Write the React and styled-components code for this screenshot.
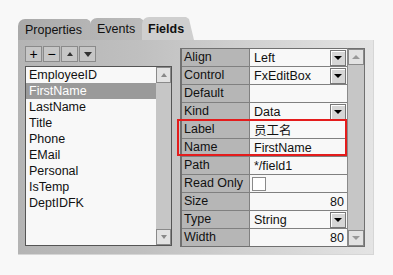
import React from "react";
import styled, { createGlobalStyle, css } from "styled-components";

const Global = createGlobalStyle`
  body {
    margin: 0;
    background: #f8f8f8;
    font-family: "Liberation Sans", Arial, "Noto Sans CJK SC", sans-serif;
    font-size: 12px;
    color: #111;
  }
`;

const Root = styled.div`
  padding: 17px 0 0 18px;
  width: 356px;
`;

const TabBar = styled.div`
  display: flex;
  align-items: flex-end;
  height: 23px;
`;

const Tab = styled.div`
  position: relative;
  box-sizing: border-box;
  height: ${(p) => p.$h}px;
  width: ${(p) => p.$w}px;
  margin-left: ${(p) => p.$ml || 0}px;
  padding-left: ${(p) => p.$pl}px;
  display: flex;
  align-items: center;
  border-top-left-radius: 7px;
  clip-path: polygon(0 0, calc(100% - 8px) 0, calc(100% - 5px) 2px, 100% 100%, 0 100%);
  background: ${(p) => p.$bg};
  z-index: ${(p) => p.$z};
  font-size: 12.5px;
  font-weight: ${(p) => (p.$active ? 700 : 400)};
  color: #111;
`;

const Panel = styled.div`
  display: flex;
  gap: 8px;
  box-sizing: border-box;
  height: 215px;
  padding: 6px 0 0 7px;
  background: linear-gradient(to right, #b4b4b4 0%, #c0c0c0 35%, #cecece 60%, #e4e4e4 100%);
  border-right: 1px solid #d6d6d6;
  border-bottom: 1px solid #d6d6d6;
`;

const LeftCol = styled.div`
  display: flex;
  flex-direction: column;
  gap: 4px;
  width: 147px;
`;

const ToolRow = styled.div`
  display: flex;
  gap: 1px;
  height: 16px;
`;

const ToolButton = styled.div`
  box-sizing: border-box;
  width: 17px;
  height: 16px;
  border: 1px solid #8a8a8a;
  background: #c6c6c6;
  display: flex;
  align-items: center;
  justify-content: center;
  font-size: 14px;
  font-weight: 400;
  color: #000;
  line-height: 1;
`;

const Tri = styled.span`
  width: 0;
  height: 0;
  border-left: ${(p) => p.$s}px solid transparent;
  border-right: ${(p) => p.$s}px solid transparent;
  ${(p) =>
    p.$up
      ? css`border-bottom: ${p.$h}px solid ${p.$c};`
      : css`border-top: ${p.$h}px solid ${p.$c};`}
`;

const ListBox = styled.div`
  box-sizing: border-box;
  height: 180px;
  border: 1px solid #555;
  background: #f8f8f8;
  display: flex;
`;

const Items = styled.div`
  flex: 1;
  display: flex;
  flex-direction: column;
`;

const Item = styled.div`
  height: 16px;
  line-height: 16px;
  padding-left: 3px;
  font-size: 12.5px;
  background: ${(p) => (p.$sel ? "#9a9a9a" : "transparent")};
  color: ${(p) => (p.$sel ? "#fff" : "#111")};
`;

const ScrollBar = styled.div`
  box-sizing: border-box;
  width: ${(p) => p.$w}px;
  display: flex;
  flex-direction: column;
  justify-content: space-between;
  background: #c6c6c6;
  ${(p) => p.$border && css`border: 1px solid #707070; border-left: 0;`}
`;

const ScrollBtn = styled.div`
  box-sizing: border-box;
  height: ${(p) => p.$h}px;
  border: 1px solid #8a8a8a;
  background: #e2e2e2;
  display: flex;
  align-items: center;
  justify-content: center;
`;

const GridWrap = styled.div`
  position: relative;
  margin-top: 2px;
  display: flex;
  height: 199px;
`;

const Grid = styled.div`
  box-sizing: border-box;
  width: 168px;
  border: 1px solid #707070;
  border-left-width: 2px;
  border-right-color: #8a8a8a;
  display: flex;
  flex-direction: column;
`;

const Row = styled.div`
  display: flex;
  height: 18px;
  box-sizing: border-box;
  border-bottom: ${(p) => (p.$last ? 0 : "1px solid #808080")};
`;

const NameCell = styled.div`
  box-sizing: border-box;
  width: 68px;
  padding-left: 2px;
  background: #b6b6b6;
  border-right: 1px solid #808080;
  line-height: 17px;
  font-size: 12.5px;
  color: #111;
`;

const ValueCell = styled.div`
  flex: 1;
  display: flex;
  align-items: center;
  justify-content: ${(p) => (p.$right ? "flex-end" : "space-between")};
  padding: 0 ${(p) => (p.$right ? 3 : 1)}px 0 4px;
  background: #f8f8f8;
  font-size: 12.5px;
`;

const DropBtn = styled.div`
  box-sizing: border-box;
  width: 16px;
  height: 16px;
  border: 1px solid #777;
  box-shadow: inset 1px 1px 0 #fff;
  background: #d6d6d6;
  display: flex;
  align-items: center;
  justify-content: center;
`;

const Check = styled.div`
  box-sizing: border-box;
  width: 14px;
  height: 14px;
  border: 1px solid #8a8a8a;
  background: #fff;
  margin-left: -2px;
`;

const Highlight = styled.div`
  position: absolute;
  left: -3px;
  top: 71px;
  width: 170px;
  height: 37px;
  box-sizing: border-box;
  border: 2px solid #e41c1c;
  pointer-events: none;
`;

const fields = [
  "EmployeeID",
  "FirstName",
  "LastName",
  "Title",
  "Phone",
  "EMail",
  "Personal",
  "IsTemp",
  "DeptIDFK",
];

const props = [
  { n: "Align", v: "Left", dd: true },
  { n: "Control", v: "FxEditBox", dd: true },
  { n: "Default", v: "" },
  { n: "Kind", v: "Data", dd: true },
  { n: "Label", v: "员工名" },
  { n: "Name", v: "FirstName" },
  { n: "Path", v: "*/field1" },
  { n: "Read Only", check: true },
  { n: "Size", v: "80", right: true },
  { n: "Type", v: "String", dd: true },
  { n: "Width", v: "80", right: true },
];

export default function App() {
  return (
    <Root>
      <Global />
      <TabBar>
        <Tab $h={21} $w={77} $pl={7} $bg="linear-gradient(to right,#a9a9a9,#b6b6b6)" $z={1}>
          Properties
        </Tab>
        <Tab $h={22} $w={58} $ml={-5} $pl={7} $bg="linear-gradient(to right,#b3b3b3,#bdbdbd)" $z={2}>
          Events
        </Tab>
        <Tab $h={23} $w={52} $ml={-6} $pl={6} $bg="#cfcfcf" $z={3} $active>
          Fields
        </Tab>
      </TabBar>
      <Panel>
        <LeftCol>
          <ToolRow>
            <ToolButton>+</ToolButton>
            <ToolButton>−</ToolButton>
            <ToolButton>
              <Tri $up $s={3} $h={4} $c="#333" />
            </ToolButton>
            <ToolButton>
              <Tri $s={4} $h={5} $c="#333" />
            </ToolButton>
          </ToolRow>
          <ListBox>
            <Items>
              {fields.map((f) => (
                <Item key={f} $sel={f === "FirstName"}>
                  {f}
                </Item>
              ))}
            </Items>
            <ScrollBar $w={15}>
              <ScrollBtn $h={16}>
                <Tri $up $s={3} $h={4} $c="#888" />
              </ScrollBtn>
              <ScrollBtn $h={16}>
                <Tri $s={3} $h={4} $c="#888" />
              </ScrollBtn>
            </ScrollBar>
          </ListBox>
        </LeftCol>
        <GridWrap>
          <Grid>
            {props.map((p, i) => (
              <Row key={p.n} $last={i === props.length - 1}>
                <NameCell>{p.n}</NameCell>
                <ValueCell $right={p.right}>
                  {p.check ? <Check /> : <span>{p.v}</span>}
                  {p.dd && (
                    <DropBtn>
                      <Tri $s={4} $h={4} $c="#000" />
                    </DropBtn>
                  )}
                </ValueCell>
              </Row>
            ))}
          </Grid>
          <ScrollBar $w={17} $border>
            <ScrollBtn $h={16}>
              <Tri $up $s={4} $h={4} $c="#999" />
            </ScrollBtn>
            <ScrollBtn $h={16}>
              <Tri $s={4} $h={4} $c="#999" />
            </ScrollBtn>
          </ScrollBar>
          <Highlight />
        </GridWrap>
      </Panel>
    </Root>
  );
}
